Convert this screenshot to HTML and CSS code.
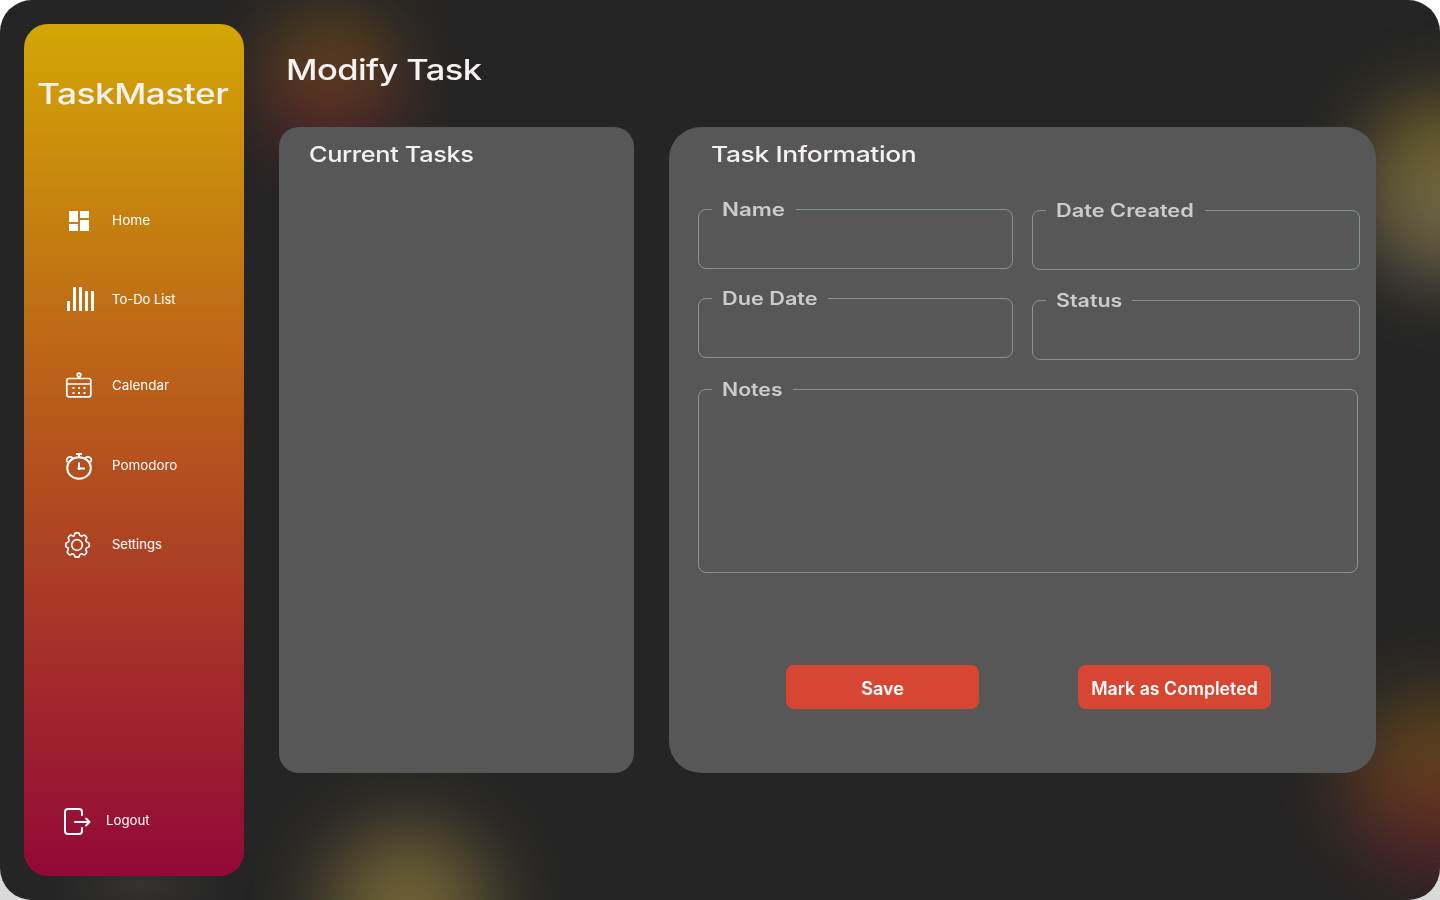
FILE: index.html
```html
<!DOCTYPE html>
<html lang="en">
<head>
<meta charset="utf-8">
<title>TaskMaster – Modify Task</title>
<link rel="stylesheet" href="styles.css">
</head>
<body>
<div class="app">
  <div class="glow glow-top"></div>
  <div class="glow glow-right"></div>
  <div class="glow glow-bottom"></div>
  <div class="glow glow-corner"></div>
  <div class="glow glow-side"></div>
  <aside class="sidebar">
    <div class="brand"><span class="wide w-brand">TaskMaster</span></div>
    <nav class="nav">
      <a class="item home"><svg width="30" height="30" viewBox="0 0 30 30"><path fill="#fff" d="M5 5h9v11H5zM16 5h9v7h-9zM5 18h9v7H5zM16 14h9v11h-9z"/></svg><span class="wide w-home">Home</span></a>
      <a class="item todo"><svg width="30" height="30" viewBox="0 1 30 30"><path fill="#fff" d="M3 17h3v10H3zM9 3h3v24H9zM15 3h3v24h-3zM21 7h3v20h-3zM27 7h3v20h-3z"/></svg><span class="wide w-todo">To-Do List</span></a>
      <a class="item calendar"><svg width="30" height="30" viewBox="0 1 30 30" fill="none" stroke="#fff" stroke-width="1.700"><rect x="2.800" y="8.500" width="24" height="18.300" rx="2"/><path d="M3 14h24M15 6.500v2"/><circle cx="15" cy="4.900" r="1.700"/><path stroke-width="2" d="M8.500 17.900h2M14 17.900h2M19.500 17.900h2M8.500 22.900h2M14 22.900h2M19.500 22.900h2"/></svg><span class="wide w-calendar">Calendar</span></a>
      <a class="item pomodoro"><svg width="30" height="30" viewBox="0 1 30 30" fill="none" stroke="#fff" stroke-width="2"><ellipse cx="15" cy="18" rx="11.800" ry="10.800"/><path d="M12 4h6M15 4v3.500M15 12.500v6h6"/><path stroke-width="1.800" d="M3.300 12.200C1.700 10 3 7 6 6.800q2-.1 3 1.500L4.300 12.500M26.700 12.200C28.300 10 27 7 24 6.800q-2-.1-3 1.500l4.700 4.200"/><circle cx="15" cy="18.500" r="1.200" fill="#fff" stroke-width="1"/></svg><span class="wide w-pomodoro">Pomodoro</span></a>
      <a class="item settings"><svg width="30" height="30" viewBox="0 0 30 30" fill="none" stroke="#fff" stroke-width="1.700" stroke-linejoin="round"><circle cx="13" cy="15" r="5.300"/><path d="M10.500 4.300Q10.700 2.800 12 2.800h2q1.300 0 1.500 1.500.2 1.300 1.400 1.700 1 .5 2-.3 1.200-1 2.200 0l1.200 1.200q1 1 0 2.200-.8 1-.3 2 .4 1.200 1.700 1.400 1.500.2 1.500 1.500v2q0 1.300-1.500 1.500-1.300.2-1.700 1.400-.5 1 .3 2 1 1.200 0 2.200l-1.200 1.200q-1 1-2.200 0-1-.8-2-.3-1.200.4-1.400 1.700-.2 1.500-1.500 1.500h-2q-1.300 0-1.500-1.500-.2-1.300-1.400-1.700-1-.5-2 .3-1.200 1-2.200 0l-1.200-1.200q-1-1 0-2.200.8-1 .3-2Q4.600 17.700 3.300 17.500 1.800 17.300 1.800 16v-2q0-1.300 1.500-1.500 1.300-.2 1.700-1.400.5-1-.3-2-1-1.200 0-2.200l1.200-1.200q1-1 2.200 0 1 .8 2 .3.200-.5.400-1.700z"/></svg><span class="wide w-settings">Settings</span></a>
    </nav>
    <a class="item logout"><svg width="30" height="30" viewBox="0 0 30 30" fill="none" stroke="#fff" stroke-width="2" stroke-linecap="round" stroke-linejoin="round"><path d="M18 9V6q0-3-3-3H4Q1 3 1 6v19q0 3 3 3h11q3 0 3-3v-3"/><path d="M11 16h14.500M22 12.500l3.500 3.500-3.500 3.500"/></svg><span class="wide w-logout">Logout</span></a>
  </aside>
  <main class="main">
    <h1 class="title"><span class="wide w-title">Modify Task</span></h1>
    <div class="panels">
      <section class="panel current"><h2><span class="wide w-current">Current Tasks</span></h2></section>
      <section class="panel info">
        <h2><span class="wide w-info">Task Information</span></h2>
        <form class="form">
          <div class="columns">
            <div class="col col-left">
              <fieldset class="name"><legend><span class="wide w-name">Name</span></legend></fieldset>
              <fieldset class="due"><legend><span class="wide w-due">Due Date</span></legend></fieldset>
            </div>
            <div class="col col-right">
              <fieldset class="created"><legend><span class="wide w-created">Date Created</span></legend></fieldset>
              <fieldset class="status"><legend><span class="wide w-status">Status</span></legend></fieldset>
            </div>
          </div>
          <fieldset class="notes"><legend><span class="wide w-notes">Notes</span></legend></fieldset>
          <div class="actions">
            <button type="button"><span class="wide w-save">Save</span></button>
            <button type="button"><span class="wide w-mark">Mark as Completed</span></button>
          </div>
        </form>
      </section>
    </div>
  </main>
</div>
</body>
</html>
```
FILE: styles.css
```css
* { box-sizing: border-box; }
body { margin: 0; background: linear-gradient(#fff 50%, #d9d9d9); height: 900px; overflow: hidden; font-family: Inter, "Liberation Sans", sans-serif; color: #f5f1f1; }
.app { position: relative; display: flex; width: 1440px; height: 900px; padding: 24px; border-radius: 32px; background: #252525; overflow: hidden; isolation: isolate; }
.glow { position: absolute; z-index: -1; border-radius: 50%; }
.glow-top { left: 257px; top: 12px; width: 146px; height: 146px; background: linear-gradient(#b98f08, #b8591b 45%, #930837); opacity: .38; filter: blur(34px); }
.glow-right { left: 1358px; top: 98px; width: 180px; height: 180px; background: linear-gradient(#8a7420, #7d7044 50%, #8a8060); opacity: .8; filter: blur(38px); }
.glow-bottom { left: 326px; top: 828px; width: 164px; height: 164px; background: #7d6c3a; opacity: .88; filter: blur(40px); }
.glow-corner { left: 1346px; top: 696px; width: 190px; height: 180px; background: linear-gradient(#a98508, #b8591b 48%, #930837); opacity: .42; filter: blur(38px); }
.glow-side { left: 50px; top: 845px; width: 180px; height: 80px; background: radial-gradient(closest-side, #353331, transparent); }
.wide { display: inline-block; white-space: nowrap; transform-origin: left center; }
.sidebar { display: flex; flex-direction: column; width: 220px; height: 852px; border-radius: 24px; background: linear-gradient(#d3a604, #b8591b 46%, #930837); }
.brand { margin: 52px 0 0 13px; height: 36px; font-size: 29px; line-height: 36px; font-weight: 500; letter-spacing: -.4px; }
.nav { display: flex; flex-direction: column; height: 460px; margin-top: 94px; }
.item { display: flex; align-items: center; height: 30px; margin-left: 40px; gap: 18px; font-size: 13px; line-height: 17px; color: #fff; }
.item svg { flex: none; }
.item .wide { margin-bottom: 1px; }
.todo { margin-top: 49px; }
.calendar { margin-top: 56px; }
.pomodoro { margin-top: 50px; }
.settings { margin-top: 49px; }
.logout { margin-top: 140px; gap: 12px; }
.main { margin-left: 35px; }
.title { margin: 28px 0 0 7px; font-size: 29px; line-height: 36px; height: 36px; font-weight: 500; letter-spacing: -.5px; }
.panels { display: flex; gap: 35px; margin-top: 39px; }
.panel { height: 646px; background: #575757; }
.panel h2 { margin: 13px 0 0; height: 28px; font-size: 22px; line-height: 28px; font-weight: 550; letter-spacing: -.3px; }
.current { width: 355px; padding-left: 30px; border-radius: 20px; }
.info { width: 707px; padding-left: 29px; border-radius: 32px; }
.info h2 { padding-left: 13px; }
.form { margin-top: 29px; }
.columns { display: flex; gap: 19px; height: 180px; }
.col { display: flex; flex-direction: column; }
.col-left { width: 315px; }
.col-right { width: 328px; }
fieldset { margin: 0; min-width: 0; padding: 0 0 0 13px; height: 72px; border: 1px solid #849491; border-radius: 8px; }
legend { padding: 1px 0 0 10px; height: 24px; line-height: 24px; font-size: 18px; font-weight: 600; color: #ccc; }
.name legend { width: 84px; }
.due { margin-top: 17px; }
.due legend { width: 116px; }
.created { margin-top: 1px; }
.created legend { width: 159px; }
.status { margin-top: 18px; }
.status legend { width: 86px; }
.notes { width: 660px; height: 196px; }
.notes legend { width: 81px; }
.actions { display: flex; gap: 99px; margin: 92px 0 0 88px; }
button { width: 193px; height: 44px; padding: 3px 0 0; border: 0; border-radius: 8px; background: #d74632; color: #fff; font: 600 18px/24px Inter, "Liberation Sans", sans-serif; }
button .wide { transform-origin: center; }
.w-home { transform: scaleX(1.05); }
.w-calendar, .w-pomodoro { transform: scaleX(1.03); }
.w-logout { transform: scaleX(1.02); }
.w-brand { transform: scaleX(1.215); }
.w-title { transform: scaleX(1.19); }
.w-current { transform: scaleX(1.15); }
.w-info { transform: scaleX(1.2); }
.w-name { transform: scaleX(1.24); }
.w-due { transform: scaleX(1.205); }
.w-created { transform: scaleX(1.21); }
.w-status { transform: scaleX(1.19); }
.w-notes { transform: scaleX(1.18); }
.w-mark { transform: scaleX(.985); }
```
